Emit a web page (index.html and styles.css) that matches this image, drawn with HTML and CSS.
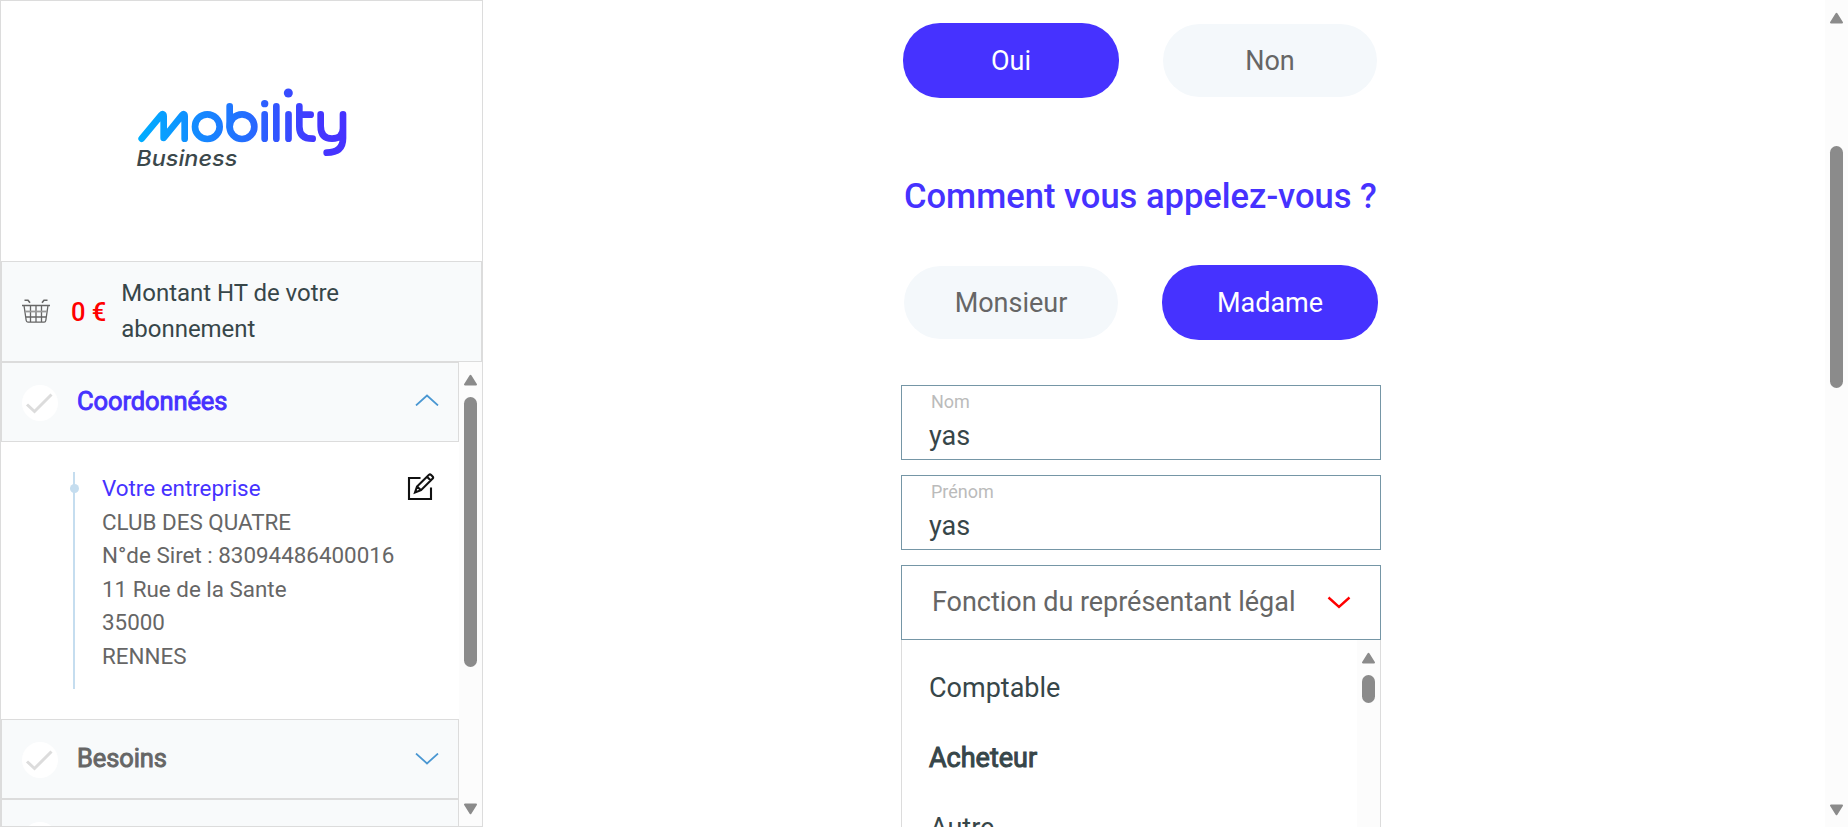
FILE: index.html
```html
<!DOCTYPE html>
<html lang="fr">
<head>
<meta charset="utf-8">
<title>Mobility Business</title>
<link rel="stylesheet" href="styles.css">
</head>
<body>
<div class="page">
  <aside class="sidebar">
    <div class="brand">
      <svg class="logo" viewBox="0 0 720 315" role="img" aria-label="mobility Business">
        <defs>
          <linearGradient id="g" gradientUnits="userSpaceOnUse" x1="55" y1="0" x2="680" y2="0">
            <stop offset="0" stop-color="#00aeff"/><stop offset="0.5" stop-color="#2370ff"/><stop offset="0.85" stop-color="#4436ff"/><stop offset="1" stop-color="#4632ff"/>
          </linearGradient>
        </defs>
        <g fill="none" stroke="url(#g)" stroke-width="20" stroke-linecap="round" stroke-linejoin="round">
          <path d="M65 191 L123 121 Q131 113 131 124 V189 L186 121 Q194 113 194 124 V191"/>
          <circle cx="262" cy="155" r="37"/>
          <circle cx="366" cy="155" r="37"/>
          <path d="M329 94V155M434 118V191M469 94V191M505.500 118V191"/>
          <path d="M538 94V155Q538 191 578 191M538 119H572"/>
          <path d="M602 118V153Q602 191 636 191Q669 191 669 160M669 118V190Q669 233 620 233"/>
        </g>
        <g fill="url(#g)"><circle cx="434" cy="86" r="11"/><circle cx="505" cy="54" r="13.500"/></g>
        <text class="logo-sub" x="49" y="273" textLength="303" lengthAdjust="spacingAndGlyphs">Business</text>
      </svg>
    </div>
    <div class="amount">
      <svg class="basket" viewBox="0 0 28 24" fill="none" stroke="#666" stroke-width="1.300">
        <path d="M2.500 1.200h3.500l2 2.600M25.500 1.200h-3.500l-2 2.600" stroke-width="1.600"/>
        <path d="M0 6.500h28M2 6.500l2.200 15q.2 1.600 1.700 1.600h16.200q1.500 0 1.700-1.600L26 6.500M3.500 18h21M8.500 6.500v16.500M14 6.500v16.500M19.500 6.500v16.500"/>
        <path d="M3 12.500h22" stroke="#999" stroke-width="1.800"/>
      </svg>
      <span class="price">0 €</span>
      <span class="amount-label">Montant HT de votre abonnement</span>
    </div>
    <div class="steps">
      <div class="steps-list">
        <div class="step active">
          <span class="check"><svg viewBox="0 0 36 36"><path d="M5 19.500L12.500 26.500L29.500 9.500"/></svg></span>
          <span class="step-name">Coordonnées</span>
          <svg class="chev up" viewBox="0 0 24 12"><path d="M1 11.500L12 1.500L23 11.500"/></svg>
        </div>
        <div class="details">
          <div class="timeline"></div>
          <div class="address">
            <div class="address-title">Votre entreprise</div>
            <div>CLUB DES QUATRE</div>
            <div>N°de Siret : 83094486400016</div>
            <div>11 Rue de la Sante</div>
            <div>35000</div>
            <div>RENNES</div>
          </div>
          <svg class="edit" viewBox="0 0 28 28"><path d="M13.500 5H2V26H24V14.500"/><path d="M8 19.500L10 13.500L22 1.800Q23 .9 24.200 2L25.600 3.400Q26.700 4.500 25.700 5.500L14 17.200ZM20 3.800L24 7.800M10 13.500L14 17.200"/></svg>
        </div>
        <div class="step">
          <span class="check"><svg viewBox="0 0 36 36"><path d="M5 19.500L12.500 26.500L29.500 9.500"/></svg></span>
          <span class="step-name">Besoins</span>
          <svg class="chev" viewBox="0 0 24 12"><path d="M1 .5L12 10.500L23 .5"/></svg>
        </div>
        <div class="step">
          <span class="check"></span>
        </div>
      </div>
      <div class="scroll scroll-steps">
        <svg class="arrow" viewBox="0 0 15 12"><path d="M2 10.500H13L7.500 1.800Z"/></svg>
        <div class="thumb"></div>
        <svg class="arrow down" viewBox="0 0 15 12"><path d="M2 1.500H13L7.500 10.200Z"/></svg>
      </div>
    </div>
  </aside>
  <main class="main">
    <div class="form">
      <div class="choices"><button class="pill on">Oui</button><button class="pill">Non</button></div>
      <h2 class="question">Comment vous appelez-vous ?</h2>
      <div class="choices"><button class="pill">Monsieur</button><button class="pill on">Madame</button></div>
      <div class="fields">
        <div class="field"><span class="label">Nom</span><span class="value">yas</span></div>
        <div class="field"><span class="label">Prénom</span><span class="value">yas</span></div>
        <div class="select"><span>Fonction du représentant légal</span><svg class="caret" viewBox="0 0 24 13"><path d="M1.500 1.500L12 11L22.500 1.500"/></svg></div>
      </div>
      <div class="menu">
        <div class="options"><div>Comptable</div><div class="bold"><span>Acheteur</span></div><div class="indent">Autre</div></div>
        <div class="scroll scroll-menu">
          <svg class="arrow" viewBox="0 0 15 12"><path d="M2 10.500H13L7.500 1.800Z"/></svg>
          <div class="thumb"></div>
        </div>
      </div>
    </div>
  </main>
  <div class="scroll scroll-page">
    <svg class="arrow" viewBox="0 0 15 12"><path d="M2 10.500H13L7.500 1.800Z"/></svg>
    <div class="thumb"></div>
    <svg class="arrow down" viewBox="0 0 15 12"><path d="M2 1.500H13L7.500 10.200Z"/></svg>
  </div>
</div>
</body>
</html>
```
FILE: styles.css
```css
* { box-sizing: border-box; }
body { margin: 0; font-family: Roboto, "Liberation Sans", sans-serif; color: #374649; background: #fff; overflow: hidden; }
.page { display: flex; height: 827px; overflow: hidden; }
svg { display: block; flex: none; }

.sidebar { width: 483px; height: 827px; flex: none; border: 1px solid #dcdcdc; display: flex; flex-direction: column; }
.brand { height: 260px; flex: none; padding: 74px 0 0 119px; }
.logo { width: 240px; height: 105px; }
.logo-sub { font: italic 500 66px Inter, sans-serif; fill: #3b484b; }
.amount { height: 101px; flex: none; border: 1px solid #dcdcdc; background: #f8fafb; display: flex; align-items: center; padding-left: 20px; font-size: 24px; line-height: 36px; }
.basket { width: 28px; height: 24px; margin-top: -2px; }
.price { color: #f00; font-weight: 500; font-size: 25.500px; margin: 0 15px 0 21px; white-space: nowrap; }
.amount-label { width: 260px; margin-top: -2px; letter-spacing: -0.030px; }
.steps { flex: 1; min-height: 0; display: flex; }
.steps-list { width: 458px; flex: none; overflow: hidden; }
.step { height: 80px; border: 1px solid #dcdcdc; background: #f8fafb; display: flex; align-items: center; padding: 0 19px 0 20px; font-size: 25.500px; color: #666; }
.active { color: #4632ff; }
.check { width: 36px; height: 36px; border-radius: 50%; background: #fff; margin: 1px 19px 0 0; flex: none; }
.check path { fill: none; stroke: #dcdcdc; stroke-width: 3; }
.step-name { flex: 1; margin-top: -2px; letter-spacing: -0.100px; -webkit-text-stroke: 0.9px currentColor; }
.chev { width: 24px; height: 12px; }
.chev path { fill: none; stroke: #4a97d2; stroke-width: 1.700; }
.up { margin-top: -4px; }
.details { height: 277px; padding: 30px 24px 30px 72px; display: flex; align-items: flex-start; }
.timeline { width: 2px; height: 217px; background: #c5ddef; position: relative; }
.timeline::before { content: ""; position: absolute; left: -3px; top: 12px; width: 9px; height: 9px; border-radius: 50%; background: #c5ddef; }
.address { flex: 1; margin-left: 27px; font-size: 22.400px; line-height: 33.600px; color: #666; white-space: nowrap; }
.address-title { color: #4632ff; }
.edit { width: 28px; height: 28px; margin-top: 1px; }
.edit path { fill: none; stroke: #111; stroke-width: 2.100; }

.scroll { width: 23px; flex: none; background: #fcfcfc; display: flex; flex-direction: column; align-items: center; }
.arrow { width: 15px; height: 12px; }
.arrow path { fill: #8b8b8b; stroke: #8b8b8b; stroke-width: 2; stroke-linejoin: round; }
.thumb { width: 13px; border-radius: 7px; background: #8b8b8b; }
.down { margin-top: auto; }
.scroll-steps { padding: 12px 0 11px; }
.scroll-steps .thumb { height: 270px; margin-top: 11px; }
.scroll-page { padding: 12px 0 11px; }
.scroll-page .thumb { height: 242px; margin-top: 122px; }
.scroll-menu { padding-top: 12px; }
.scroll-menu .thumb { height: 28px; margin-top: 11px; }

.main { flex: 1; padding: 23px 0 0 418px; }
.form { width: 480px; }
.choices { height: 75px; display: flex; align-items: center; justify-content: space-between; padding: 0 3px 0 2px; }
.pill { width: 214px; height: 73px; margin: 0 1px; padding: 0; border: 0; border-radius: 37px; background: #f4f8fb; color: #666; font: 27px Roboto, sans-serif; }
.on { width: 216px; height: 75px; margin: 0; background: #4632ff; color: #fff; }
.question { height: 52px; margin: 72px 0 43px 3px; font-size: 34.500px; line-height: 52px; font-weight: 500; color: #4632ff; white-space: nowrap; }
.fields { display: flex; flex-direction: column; gap: 15px; margin-top: 45px; }
.field, .select { height: 75px; border: 1px solid #7596a6; }
.field { display: flex; flex-direction: column; padding: 4px 0 0 27px; }
.label { font-size: 18px; line-height: 24px; color: #bbb; padding-left: 2px; }
.value { font-size: 27px; line-height: 40px; margin-top: 2px; }
.select { display: flex; align-items: center; padding: 0 29px 2px 30px; justify-content: space-between; font-size: 27px; letter-spacing: -0.030px; color: #666; white-space: nowrap; }
.caret { width: 24px; height: 13px; margin-top: 1px; }
.caret path { fill: none; stroke: #f00; stroke-width: 2.400; }
.menu { height: 187px; overflow: hidden; border: solid #dcdcdc; border-width: 0 1px; display: flex; }
.options { flex: 1; padding: 13px 0 0 27px; font-size: 27px; line-height: 70px; }
.bold span { -webkit-text-stroke: 1px currentColor; }
.indent { padding-left: 1px; }
```
